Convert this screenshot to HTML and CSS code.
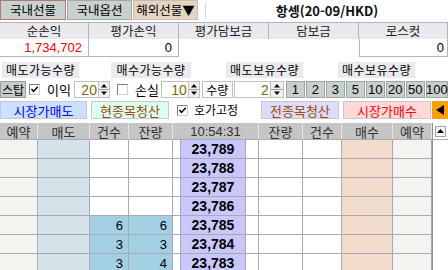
FILE: index.html
```html
<!DOCTYPE html>
<html lang="ko">
<head>
<meta charset="utf-8">
<link rel="stylesheet" href="styles.css">
</head>
<body>
<div class="app">
  <div class="tabs">
    <div class="tab sel">국내선물</div>
    <div class="tab">국내옵션</div>
    <div class="tab ovs">해외선물▼</div>
    <div class="title">항셍(20-09/HKD)</div>
  </div>

  <div class="summary">
    <div class="sh">순손익</div>
    <div class="sh">평가손익</div>
    <div class="sh">평가담보금</div>
    <div class="sh">담보금</div>
    <div class="sh">로스컷</div>
    <div class="sv box red num">1,734,702</div>
    <div class="sv box num">0</div>
    <div class="sv"></div>
    <div class="sv"></div>
    <div class="sv box num last">0</div>
  </div>

  <div class="qty">
    <div class="ql w77">매도가능수량</div><div class="qv w32"></div>
    <div class="ql w80">매수가능수량</div><div class="qv w32"></div>
    <div class="ql w77 ml3">매도보유수량</div><div class="qv w34"></div>
    <div class="ql w77 ml1">매수보유수량</div><div class="qv w33"></div>
  </div>

  <div class="ctrl">
    <div class="stop">스탑</div>
    <div class="chk ml3"><svg width="9" height="9" viewBox="0 0 9 9"><path d="M1.5 4 L3.5 6.5 L7.8 1.8" stroke="#000" stroke-width="1.4" fill="none"/></svg></div>
    <div class="lbl ml7">이익</div>
    <div class="spin ml3 w24 num">20</div><div class="arr w12"><svg width="10" height="15" viewBox="0 0 10 15"><path d="M5 2 L8 5.5 L2 5.5 Z" fill="#000"/><path d="M0 7.5 H10" stroke="#a0a0a0"/><path d="M2 9.5 L8 9.5 L5 13 Z" fill="#000"/></svg></div>
    <div class="chk ml7"></div>
    <div class="lbl ml7">손실</div>
    <div class="spin ml2 w27 num">10</div><div class="arr w12"><svg width="10" height="15" viewBox="0 0 10 15"><path d="M5 2 L8 5.5 L2 5.5 Z" fill="#000"/><path d="M0 7.5 H10" stroke="#a0a0a0"/><path d="M2 9.5 L8 9.5 L5 13 Z" fill="#000"/></svg></div>
    <div class="qbox ml2">수량</div>
    <div class="spin ml1 w36 num">2</div><div class="arr w14"><svg width="12" height="15" viewBox="0 0 12 15"><path d="M6 2 L9 5.5 L3 5.5 Z" fill="#000"/><path d="M0 7.5 H12" stroke="#a0a0a0"/><path d="M3 9.5 L9 9.5 L6 13 Z" fill="#000"/></svg></div>
    <div class="nums">
      <div class="nb num">1</div>
      <div class="nb num">2</div>
      <div class="nb num">3</div>
      <div class="nb num">5</div>
      <div class="nb num">10</div>
      <div class="nb num">20</div>
      <div class="nb num">50</div>
      <div class="nb num wide">100</div>
    </div>
  </div>

  <div class="acts">
    <div class="act sell">시장가매도</div>
    <div class="act cur">현종목청산</div>
    <div class="chk ml8"><svg width="9" height="9" viewBox="0 0 9 9"><path d="M1.5 4 L3.5 6.5 L7.8 1.8" stroke="#000" stroke-width="1.4" fill="none"/></svg></div>
    <div class="lbl ml6 fix">호가고정</div>
    <div class="act all">전종목청산</div>
    <div class="act buy">시장가매수</div>
    <div class="orange"><svg width="10" height="12" viewBox="0 0 10 12"><path d="M9 1 L9 11 L1 6 Z" fill="#000"/></svg></div>
  </div>

  <div class="bookhead">
    <div class="hc">예약</div>
    <div class="hc">매도</div>
    <div class="hc">건수</div>
    <div class="hc">잔량</div>
    <div class="hc time num">10:54:31</div>
    <div class="hc">잔량</div>
    <div class="hc">건수</div>
    <div class="hc">매수</div>
    <div class="hc">예약</div>
    <div class="hs"><div class="up"><svg width="9" height="6" viewBox="0 0 9 6"><path d="M4.5 1 L8 5 L1 5 Z" fill="#000"/></svg></div></div>
  </div>

  <div class="book">
    <div class="track"></div>

    <div class="c rs"></div><div class="c ms"></div><div class="c"></div><div class="c"></div><div class="c"></div><div class="c pr num">23,789</div><div class="c"></div><div class="c"></div><div class="c"></div><div class="c mb"></div><div class="c rs"></div>
    <div class="c rs"></div><div class="c ms"></div><div class="c"></div><div class="c"></div><div class="c"></div><div class="c pr num">23,788</div><div class="c"></div><div class="c"></div><div class="c"></div><div class="c mb"></div><div class="c rs"></div>
    <div class="c rs"></div><div class="c ms"></div><div class="c"></div><div class="c"></div><div class="c"></div><div class="c pr num">23,787</div><div class="c"></div><div class="c"></div><div class="c"></div><div class="c mb"></div><div class="c rs"></div>
    <div class="c rs"></div><div class="c ms"></div><div class="c"></div><div class="c"></div><div class="c"></div><div class="c pr num">23,786</div><div class="c"></div><div class="c"></div><div class="c"></div><div class="c mb"></div><div class="c rs"></div>
    <div class="c rs"></div><div class="c ms"></div><div class="c q num">6</div><div class="c q num">6</div><div class="c"></div><div class="c pr num">23,785</div><div class="c"></div><div class="c"></div><div class="c"></div><div class="c mb"></div><div class="c rs"></div>
    <div class="c rs"></div><div class="c ms"></div><div class="c q num">3</div><div class="c q num">3</div><div class="c"></div><div class="c pr num">23,784</div><div class="c"></div><div class="c"></div><div class="c"></div><div class="c mb"></div><div class="c rs"></div>
    <div class="c rs"></div><div class="c ms"></div><div class="c q num">3</div><div class="c q num">4</div><div class="c"></div><div class="c pr num">23,783</div><div class="c"></div><div class="c"></div><div class="c"></div><div class="c mb"></div><div class="c rs"></div>
  </div>
</div>
</body>
</html>
```

FILE: styles.css
```css
* { box-sizing: border-box; margin: 0; padding: 0; }
html, body { width: 448px; height: 270px; overflow: hidden; background: #ffffff; }
body {
  font-family: "Noto Sans CJK KR", "DejaVu Sans", sans-serif;
  font-size: 12px;
  line-height: 1;
  color: #000;
}
.num { font-family: "Liberation Sans Narrow", "Liberation Sans", sans-serif; }
.app { width: 448px; }

.ml1 { margin-left: 1px; } .ml2 { margin-left: 2px; } .ml3 { margin-left: 3px; }
.ml6 { margin-left: 6px; } .ml7 { margin-left: 7px; } .ml8 { margin-left: 8px; }
.w12 { width: 12px; } .w14 { width: 14px; } .w24 { width: 24px; } .w27 { width: 27px; }
.w32 { width: 32px; } .w33 { width: 33px; } .w34 { width: 34px; } .w36 { width: 36px; }
.w77 { width: 77px; } .w80 { width: 80px; }

/* tabs */
.tabs { display: flex; height: 20px; gap: 1px; }
.tab {
  width: 65px; height: 20px;
  background: #c9d1cd; border: 1px solid #a3a8a6;
  display: flex; align-items: center; justify-content: center;
  font-size: 12.5px; white-space: nowrap;
}
.tab.sel { width: 66px; border-color: #b07878; }
.tab.ovs { background: #e2d3c3; border-color: #c8bcb0; }
.title {
  flex: 1; margin-left: 6px; height: 17px; margin-top: 2px;
  border-left: 1px solid #d8d8d8;
  display: flex; align-items: center; justify-content: center;
  font-weight: bold; font-size: 13px; color: #101010;
}

/* summary */
.summary { display: grid; grid-template-columns: 89px 90px 90px 90px 89px; margin-top: 2px; }
.sh {
  height: 17px; background: #e8e8ed;
  border-top: 1px solid #b4b4bc; border-right: 1px solid #b4b4bc;
  display: flex; align-items: center; justify-content: center;
  color: #202020; font-size: 12.5px;
}
.sv {
  height: 18px; display: flex; align-items: center; justify-content: flex-end;
  padding-right: 6px; font-size: 13px;
}
.sv.box { border: 1px solid #b4b4bc; border-top: none; border-left: none; }
.sv.box:first-of-type { border-left: 1px solid #b4b4bc; }
.sv.last { border-left: 1px solid #b4b4bc; padding-right: 3px; }
.red { color: #ff0000; }

/* qty */
.qty { display: flex; margin-top: 5px; height: 16px; padding-left: 2px; }
.ql {
  height: 16px; background: #ebebef;
  display: flex; align-items: center; justify-content: center;
  letter-spacing: 0.5px; white-space: nowrap;
}
.qv { height: 16px; background: #fff; }

/* ctrl */
.ctrl { display: flex; align-items: center; height: 17px; margin-top: 3px; }
.stop {
  width: 26px; height: 17px; background: #c5cdc8; border: 1px solid #98a09b;
  display: flex; align-items: center; justify-content: center;
}
.chk {
  width: 11px; height: 11px; background: #fff; flex: none;
  border: 1px solid #808080; border-right-color: #d0d0d0; border-bottom-color: #d0d0d0;
  display: flex; align-items: center; justify-content: center;
}
.lbl { font-size: 13px; white-space: nowrap; }
.spin {
  height: 17px; background: #fff; border: 1px solid #c0c0c0; border-right: none;
  display: flex; align-items: center; justify-content: flex-end;
  color: #7a6a00; font-size: 14px; padding-right: 1px;
}
.arr {
  height: 17px; background: #f0f0f0; border: 1px solid #c0c0c0;
  display: flex; align-items: center; justify-content: center;
}
.qbox {
  width: 31px; height: 17px; background: #fff; border: 1px solid #c0c0c0;
  display: flex; align-items: center; justify-content: center;
}
.nums { display: flex; gap: 1px; margin-left: 2px; }
.nb {
  width: 19px; height: 17px; background: #c8d0cc; border: 1px solid #9ea4a1;
  display: flex; align-items: center; justify-content: center; font-size: 13px;
}
.nb.wide { width: 22px; }

/* acts */
.acts { display: flex; align-items: center; height: 18px; margin-top: 3px; }
.act {
  height: 18px; display: flex; align-items: center; justify-content: center;
  font-size: 13px; border: 1px solid #c8c8d0; white-space: nowrap;
}
.act.sell { width: 87px; background: #cce1ff; color: #0000ff; }
.act.cur { width: 78px; margin-left: 4px; background: #d9fff1; color: #a04800; }
.act.all { width: 78px; margin-left: 18px; background: #dcdcff; color: #a04800; }
.act.buy { width: 88px; margin-left: 4px; background: #ffd9d9; color: #ff0000; }
.fix { width: 49px; font-size: 12px; }
.orange {
  width: 16px; height: 18px; margin-left: 1px; background: #ffa000;
  display: flex; align-items: center; justify-content: center;
}

/* order book */
.bookhead, .book {
  display: grid;
  grid-template-columns: 37px 51px 38px 43px 7px 64px 12px 43px 38px 50px 38px 16px;
  column-gap: 1px;
}
.bookhead { margin-top: 4px; height: 16px; background: #e4e4e4; }
.hc {
  background: #c5c5c5; display: flex; align-items: center; justify-content: center;
  color: #303030; font-size: 13px;
}
.hc.time { grid-column: span 3; font-size: 13px; }
.hs { background: #fff; border-left: 1px solid #909090; display: flex; align-items: center; justify-content: center; }
.up {
  width: 11px; height: 11px; background: #f4f4f4; border: 1px solid #a0a0a0;
  display: flex; align-items: center; justify-content: center;
}
.book {
  background: #a9a9b6; row-gap: 1px; padding-top: 1px;
  grid-auto-rows: 18px;
}
.track { grid-column: 12; grid-row: 1 / span 7; background: #fff; border-left: 1px solid #909090; }
.c { background: #fff; display: flex; align-items: center; justify-content: flex-end; padding-right: 5px; font-size: 13px; }
.c.rs { background: #f5f3ef; }
.c.ms { background: #d3e3e9; }
.c.mb { background: #f1dccb; }
.c.q { background: #a3cfe3; }
.c.pr {
  background: #c9c8fe; justify-content: center; padding-right: 0;
  font-family: "Liberation Sans", sans-serif; font-weight: bold; font-size: 14px; color: #000;
}
```
